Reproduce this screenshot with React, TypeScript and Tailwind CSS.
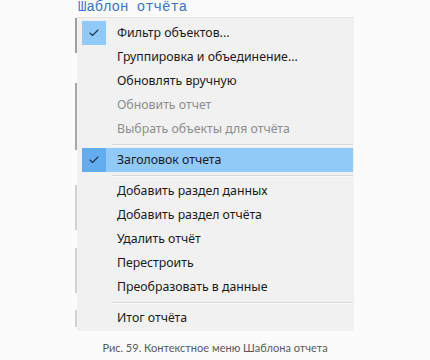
import { Check } from "lucide-react";

type Item = { label: string; checked?: boolean; disabled?: boolean; active?: boolean };

const groups: Item[][] = [
  [
    { label: "Фильтр объектов...", checked: true },
    { label: "Группировка и объединение..." },
    { label: "Обновлять вручную" },
    { label: "Обновить отчет", disabled: true },
    { label: "Выбрать объекты для отчёта", disabled: true },
  ],
  [{ label: "Заголовок отчета", checked: true, active: true }],
  [
    { label: "Добавить раздел данных" },
    { label: "Добавить раздел отчёта" },
    { label: "Удалить отчёт" },
    { label: "Перестроить" },
    { label: "Преобразовать в данные" },
  ],
  [{ label: "Итог отчёта" }],
];

function MenuRow({ item }: { item: Item }) {
  return (
    <div className={`flex h-[24px] items-center ${item.active ? "bg-[#91c9f7]" : ""}`}>
      <div
        className={`flex h-[24px] w-[24px] items-center justify-center ${
          item.checked ? (item.active ? "bg-[#62adf0]" : "bg-[#91c9f7]") : ""
        }`}
      >
        {item.checked && <Check size={12} strokeWidth={2.25} className="text-[#1f3550]" />}
      </div>
      <span
        className={`ml-[11px] text-[12.3px] ${item.disabled ? "text-[#8d8d8d]" : "text-[#1a1a1a]"}`}
      >
        {item.label}
      </span>
    </div>
  );
}

export default function App() {
  return (
    <div className="w-[430px] h-[360px] bg-[#fbfbfb] overflow-hidden" style={{ fontFamily: '"Noto Sans", "Open Sans", sans-serif' }}>
      {/* Заголовок шаблона */}
      <div className="h-[16px] pl-[78px] text-[14px] leading-[14px] text-[#3b74c2]" style={{ fontFamily: '"Liberation Mono", monospace' }}>
        Шаблон отчёта
      </div>

      <div className="flex h-[314px] pl-[75px] mt-[1px]">
        {/* Обрывки окна под меню */}
        <div className="flex w-[2px] flex-col overflow-hidden">
          <div className="mt-[1px] h-[35px] shrink-0 bg-[#a0a0a0]" />
          <div className="mt-[30px] h-[67px] shrink-0 bg-[#a8a8a8]" />
          <div className="mt-[35px] h-[45px] shrink-0 bg-[#d2d2d2]" />
          <div className="mt-[18px] h-[45px] shrink-0 bg-[#d2d2d2]" />
          <div className="mt-[17px] h-[17px] shrink-0 bg-[#d2d2d2]" />
        </div>

        {/* Контекстное меню */}
        <div className="w-[277px] h-[314px] border-t border-[#e2e2e2] bg-[#f1f1f1] pl-[5px] pr-[1px] pt-[3px]">
          {groups.map((g, gi) => (
            <div key={gi}>
              {gi > 0 && (
                <div className="ml-[30px] mt-[3px] mb-[2px] h-[2px] border-t border-[#d8d8d8] bg-white/70" />
              )}
              {g.map((it) => (
                <MenuRow key={it.label} item={it} />
              ))}
            </div>
          ))}
        </div>
      </div>

      <div className="mt-[9px] text-center text-[11px] text-[#5a5a5a]" style={{ fontFamily: 'Lato, "Noto Sans", sans-serif' }}>
        Рис. 59. Контекстное меню Шаблона отчета
      </div>
    </div>
  );
}
